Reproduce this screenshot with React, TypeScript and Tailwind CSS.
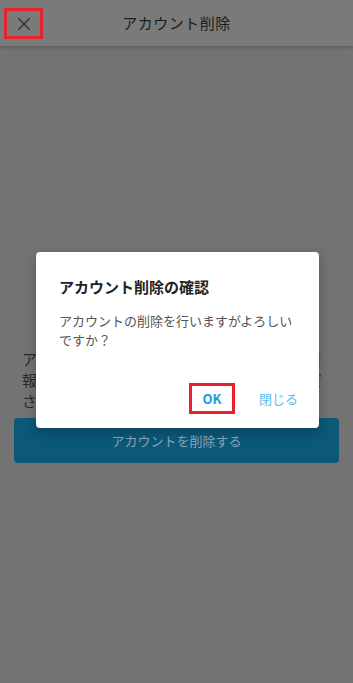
import React from 'react';

const jp = { fontFamily: '"Noto Sans CJK JP", "Noto Sans", sans-serif' };

// Header bar (shown dimmed under the modal overlay)
const Header: React.FC = () => (
  <div className="relative h-[46px] bg-[#7a7a7a] shadow-[0_2px_3px_rgba(0,0,0,0.18)] flex items-center justify-center">
    <button className="absolute left-[4px] top-[8px] w-[39px] h-[31px] border-[3px] border-[#e8212c] flex items-center justify-center">
      <svg width="18" height="18" viewBox="0 0 24 24" fill="none" stroke="#2f2f2f" strokeWidth="1.8" strokeLinecap="square">
        <path d="M5 5L19 19M19 5L5 19" />
      </svg>
    </button>
    <h1 className="text-[15px] text-[#1c1c1c] tracking-[0.5px]">アカウント削除</h1>
  </div>
);

// Confirmation dialog
const ConfirmDialog: React.FC = () => (
  <div className="absolute left-[36px] top-[252px] w-[283px] h-[176px] bg-white rounded-[4px] shadow-[0_4px_12px_rgba(0,0,0,0.25)] flex flex-col">
    <h2 className="mt-[25px] px-[23px] text-[15px] font-bold text-[#222] leading-[20px]">アカウント削除の確認</h2>
    <p className="mt-[14px] px-[23px] text-[13px] text-[#555] leading-[19px]">
      アカウントの削除を行いますがよろしいですか？
    </p>
    <div className="mt-auto mb-[14px] mr-[21px] flex justify-end items-center gap-[24px]">
      <button className="w-[46px] h-[31px] border-[3px] border-[#e8212c] text-[13px] font-bold text-[#1b9fd8] flex items-center justify-center">
        OK
      </button>
      <button className="text-[13px] text-[#5cbde8]">閉じる</button>
    </div>
  </div>
);

export default function App() {
  return (
    <div className="relative h-[683px] bg-[#737373] overflow-hidden" style={jp}>
      <Header />
      <div className="px-[14px] pt-[302px]">
        <p className="px-[8px] text-[15px] leading-[21px] text-[#2a2a2a]">
          アカウントを削除すると、登録されている情報は削除され、復元できません。ご注意ください。
        </p>
        <button className="mt-[7px] w-full h-[45px] rounded-[4px] bg-[#0b5878] text-[13px] text-[#8aa6b6]">
          アカウントを削除する
        </button>
      </div>
      <ConfirmDialog />
    </div>
  );
}
